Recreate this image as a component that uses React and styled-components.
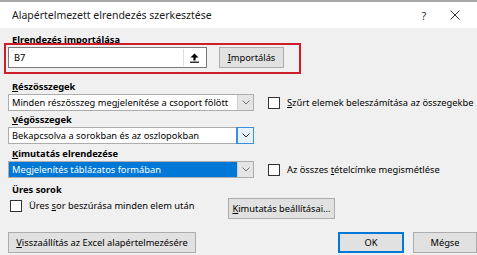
import React from "react";
import styled, { createGlobalStyle } from "styled-components";

const Global = createGlobalStyle`
  html, body { margin: 0; padding: 0; background: #f0f0f0; }
  body { font-family: "Noto Sans", "Open Sans", sans-serif; font-size: 9.3px; color: #000; }
  * { box-sizing: border-box; }
`;

const Window = styled.div`
  position: relative;
  width: 477px;
  height: 255px;
  overflow: hidden;
  background: #f0f0f0;
  display: flex;
  flex-direction: column;
`;

const TopEdge = styled.div`
  height: 2px;
  background: #a8a8a8;
`;

const TitleBar = styled.div`
  height: 26px;
  background: #fff;
  display: flex;
  align-items: center;
  padding-left: 12px;
  font-size: 10.5px;
  color: #1a1a1a;
`;

const Title = styled.div`
  flex: 1;
`;

const TitleBtn = styled.div`
  width: ${(p) => p.w}px;
  display: flex;
  justify-content: center;
  align-items: center;
  color: #333;
  font-size: 11px;
`;

const Content = styled.div`
  flex: 1;
  padding: 4px 0 0 8px;
  display: flex;
  flex-direction: column;
`;

const Label = styled.div`
  font-weight: 700;
  line-height: 15px;
  height: 15px;
  padding-left: 4px;
  margin-top: ${(p) => p.mt || 0}px;
`;

const U = styled.span`
  text-decoration: underline;
  text-underline-offset: 1px;
`;

const Row = styled.div`
  display: flex;
  align-items: ${(p) => p.align || "center"};
  margin-top: ${(p) => p.mt || 0}px;
`;

const Highlight = styled.div`
  position: absolute;
  left: 4px;
  top: 43px;
  width: 297px;
  height: 31px;
  border: 2px solid #cc1f2a;
  pointer-events: none;
`;

const TextInput = styled.div`
  width: 199px;
  height: 21px;
  background: #fff;
  border: 1px solid #7a7a7a;
  display: flex;
  align-items: center;
  padding: 1px 1px 1px 5px;
`;

const InputText = styled.div`
  flex: 1;
`;

const UploadBtn = styled.div`
  width: 22px;
  height: 100%;
  border-left: 1px solid #e0e0e0;
  display: flex;
  align-items: center;
  justify-content: center;
`;

const Button = styled.div`
  height: ${(p) => p.h || 21}px;
  width: ${(p) => p.w}px;
  flex-shrink: 0;
  background: #e1e1e1;
  border: 1px solid ${(p) => (p.primary ? "#0078d7" : "#adadad")};
  box-shadow: ${(p) => (p.primary ? "inset 0 0 0 1px #0078d7" : "none")};
  display: flex;
  align-items: center;
  justify-content: center;
  white-space: nowrap;
  margin-left: ${(p) => p.ml || 0}px;
`;

const Select = styled.div`
  width: 246px;
  height: 17px;
  display: flex;
  border: 1px solid #adadad;
  background: #fff;
  flex-shrink: 0;
`;

const SelectText = styled.div`
  flex: 1;
  padding-left: 3px;
  line-height: 15px;
  white-space: nowrap;
  overflow: hidden;
  background: ${(p) => (p.selected ? "#0078d7" : "transparent")};
  color: ${(p) => (p.selected ? "#fff" : "#000")};
`;

const Arrow = styled.div`
  position: relative;
  width: 16px;
  height: 15px;
  display: flex;
  align-items: center;
  justify-content: center;
  background: ${(p) => (p.focus ? "#e5f1fb" : "#e5e5e5")};
  border-left: 1px solid ${(p) => (p.focus ? "#3c8fe0" : "#cfcfcf")};
  box-shadow: ${(p) => (p.focus ? "0 0 0 1px #3c8fe0" : "none")};
`;

const CheckWrap = styled.div`
  display: flex;
  align-items: center;
  gap: 7px;
  margin-left: ${(p) => p.ml || 0}px;
  margin-top: ${(p) => p.mt || 0}px;
  width: ${(p) => (p.w ? `${p.w}px` : "auto")};
  flex-shrink: 0;
  white-space: nowrap;
`;

const Box = styled.div`
  width: 12px;
  height: 12px;
  flex-shrink: 0;
  background: #fff;
  border: 1px solid #333;
`;

const Spacer = styled.div`
  flex: 1;
`;

const Chevron = ({ color = "#606060" }) => (
  <svg width="8" height="5" viewBox="0 0 8 5">
    <path d="M0.5 0.5 L4 4 L7.5 0.5" fill="none" stroke={color} strokeWidth="1" />
  </svg>
);

const Check = ({ children, ml, mt, w }) => (
  <CheckWrap ml={ml} mt={mt} w={w}>
    <Box />
    <span>{children}</span>
  </CheckWrap>
);

const Combo = ({ text, focus, selected }) => (
  <Select>
    <SelectText selected={selected}>{text}</SelectText>
    <Arrow focus={focus}>
      <Chevron color={focus ? "#303030" : "#707070"} />
    </Arrow>
  </Select>
);

export default function App() {
  return (
    <>
      <Global />
      <Window>
        <TopEdge />
        <TitleBar>
          <Title>Alapértelmezett elrendezés szerkesztése</Title>
          <TitleBtn w={18}>?</TitleBtn>
          <TitleBtn w={44}>
            <svg width="10" height="10" viewBox="0 0 10 10">
              <path d="M0.5 0.5 L9.5 9.5 M9.5 0.5 L0.5 9.5" stroke="#333" strokeWidth="1" />
            </svg>
          </TitleBtn>
        </TitleBar>
        <Content>
          <Label>
            <U>E</U>lrendezés importálása
          </Label>
          <Row>
            <TextInput>
              <InputText>B7</InputText>
              <UploadBtn>
                <svg width="9" height="10" viewBox="0 0 9 10">
                  <path d="M4.5 0.5 L8.5 4.5 L5.6 4.5 L5.6 7.5 L3.4 7.5 L3.4 4.5 L0.5 4.5 Z" fill="#000" />
                  <rect x="0" y="8.6" width="9" height="1.2" fill="#000" />
                </svg>
              </UploadBtn>
            </TextInput>
            <Button w={65} ml={12}>
              <span>
                <U>I</U>mportálás
              </span>
            </Button>
          </Row>
          <Label mt={11}>
            <U>R</U>észösszegek
          </Label>
          <Row>
            <Combo text="Minden részösszeg megjelenítése a csoport fölött" />
            <Check ml={14}>
              <U>S</U>zűrt elemek beleszámítása az összegekbe
            </Check>
          </Row>
          <Label mt={1}>
            <U>V</U>égösszegek
          </Label>
          <Row>
            <Combo text="Bekapcsolva a sorokban és az oszlopokban" focus />
          </Row>
          <Label mt={2}>
            <U>K</U>imutatás elrendezése
          </Label>
          <Row>
            <Combo text="Megjelenítés táblázatos formában" selected />
            <Check ml={14}>
              Az összes <U>t</U>ételcímke megismétlése
            </Check>
          </Row>
          <Label mt={4}>Üres sorok</Label>
          <Row align="flex-start" mt={1}>
            <Check ml={2} mt={1} w={218}>
              Üres <U>s</U>or beszúrása minden elem után
            </Check>
            <Button w={107}>
              <span>
                <U>K</U>imutatás beállításai...
              </span>
            </Button>
          </Row>
          <Row mt={13}>
            <Button w={188}>
              <span>
                <U>V</U>isszaállítás az Excel alapértelmezésére
              </span>
            </Button>
            <Spacer />
            <Button w={66} primary>
              OK
            </Button>
            <Button w={64} ml={9}>
              Mégse
            </Button>
          </Row>
        </Content>
        <Highlight />
      </Window>
    </>
  );
}
